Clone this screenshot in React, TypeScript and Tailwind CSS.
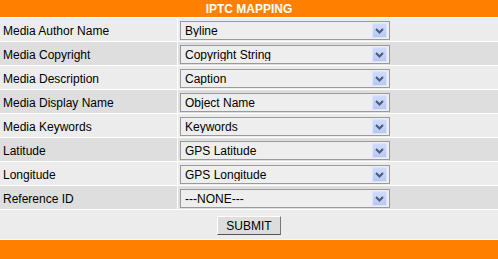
const rows: [string, string][] = [
  ["Media Author Name", "Byline"],
  ["Media Copyright", "Copyright String"],
  ["Media Description", "Caption"],
  ["Media Display Name", "Object Name"],
  ["Media Keywords", "Keywords"],
  ["Latitude", "GPS Latitude"],
  ["Longitude", "GPS Longitude"],
  ["Reference ID", "---NONE---"],
];

function FakeSelect({ value }: { value: string }) {
  return (
    <div className="flex h-[19px] w-[210px] items-center border border-[#9a9a9a] bg-[#eeeeee] pl-[4px] pr-[2px]">
      <span className="flex-1 truncate pt-px text-[12px] leading-none text-black">{value}</span>
      <span className="flex h-[15px] w-[15px] items-center justify-center border border-[#dbe4fb] bg-gradient-to-b from-[#cfdcfb] to-[#b6c9f4]">
        <svg width="9" height="6" viewBox="0 0 9 6">
          <path d="M1 1 L4.5 4.5 L8 1" fill="none" stroke="#4b5b7c" strokeWidth="2" />
        </svg>
      </span>
    </div>
  );
}

export default function App() {
  return (
    <div className="flex h-[259px] w-[498px] flex-col gap-px bg-white font-['Liberation_Sans',Arial,sans-serif] text-black">
      <div className="flex h-[17px] items-center justify-center bg-[#ff8000] text-[12px] font-bold text-white">
        IPTC MAPPING
      </div>
      {rows.map(([label, value], i) => (
        <div key={label} className="grid h-[23px] grid-cols-[177px_1fr] gap-x-px">
          <div
            className={`flex items-center pl-[3px] pt-[2px] text-[12px] ${i % 2 === 0 ? "bg-[#ececec]" : "bg-[#dedede]"}`}
          >
            {label}
          </div>
          <div
            className={`flex items-start pl-[2px] pt-[3px] ${i % 2 === 0 ? "bg-[#ececec]" : "bg-[#dedede]"}`}
          >
            <FakeSelect value={value} />
          </div>
        </div>
      ))}
      <div className="flex h-[29px] items-start justify-center bg-[#ececec] pt-[6px]">
        <button className="h-[19px] w-[64px] border border-t-white border-l-white border-r-[#777] border-b-[#555] bg-[#dddddd] pt-px text-[12px] leading-none text-black">
          SUBMIT
        </button>
      </div>
      <div className="flex-1 bg-[#ff8000]" />
    </div>
  );
}
